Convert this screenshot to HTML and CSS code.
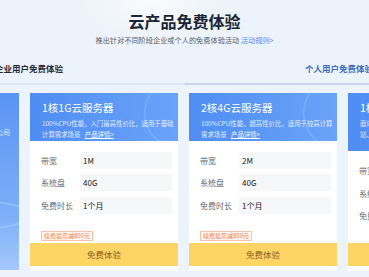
FILE: index.html
```html
<!DOCTYPE html>
<html lang="zh-CN">
<head>
  <meta charset="UTF-8" />
  <meta name="viewport" content="width=device-width, initial-scale=1.0"/>
  <title>云产品免费体验</title>
  <link rel="stylesheet" href="styles.css">
</head>
<body>
  <!-- 标题区 -->
  <div class="hero">
    <h1>云产品免费体验</h1>
    <p>推出针对不同阶段企业或个人的免费体验活动 <a href="#">活动规则&gt;</a></p>
  </div>

  <!-- 切换标签 -->
  <div class="tabs">
    <span class="tab">企业用户免费体验</span>
    <span class="tab tab-right">个人用户免费体验</span>
  </div>
  <div class="tab-line"><span></span><span class="on"></span></div>

  <!-- 卡片列表 -->
  <div class="cards">
    <div class="side-panel">
      <div class="side-text">适用于成长型企业公司</div>
    </div>

    <div class="card">
      <div class="card-head">
        <h3>1核1G云服务器</h3>
        <p>100%CPU性能，入门最高性价比，适用于基础计算需求场景 <a href="#">产品详情&gt;</a></p>
      </div>
      <div class="card-body">
        <div class="row"><span class="label">带宽</span><span class="value">1M</span></div>
        <div class="row"><span class="label">系统盘</span><span class="value">40G</span></div>
        <div class="row"><span class="label">免费时长</span><span class="value">1个月</span></div>
        <span class="badge">续费最高减800元</span>
      </div>
      <div class="btn">免费体验</div>
    </div>

    <div class="card">
      <div class="card-head">
        <h3>2核4G云服务器</h3>
        <p>100%CPU性能，超高性价比，适用于较高计算需求场景 <a href="#">产品详情&gt;</a></p>
      </div>
      <div class="card-body">
        <div class="row"><span class="label">带宽</span><span class="value">2M</span></div>
        <div class="row"><span class="label">系统盘</span><span class="value">40G</span></div>
        <div class="row"><span class="label">免费时长</span><span class="value">1个月</span></div>
        <span class="badge">续费最高减800元</span>
      </div>
      <div class="btn">免费体验</div>
    </div>

    <div class="card">
      <div class="card-head">
        <h3>1核2G轻量服务器</h3>
        <p>面向轻量应用场景，开箱即用，适用于小型网站、博客等应用的服务器</p>
      </div>
      <div class="card-body">
        <div class="row"><span class="label">带宽</span><span class="value">3M</span></div>
        <div class="row"><span class="label">系统盘</span><span class="value">50G</span></div>
        <div class="row"><span class="label">免费时长</span><span class="value">1个月</span></div>
      </div>
      <div class="btn">免费体验</div>
    </div>
  </div>
</body>
</html>
```

FILE: styles.css
```css
/* 基础设置 */
* {
  margin: 0;
  padding: 0;
  box-sizing: border-box;
}
html, body {
  width: 100%;
  height: 100%;
  overflow: hidden;
}
body {
  font-family: "Noto Sans CJK SC", "Noto Sans", sans-serif;
  background:
    radial-gradient(ellipse 70px 40px at 150px 0, rgba(255, 255, 255, 0.7), transparent),
    #edf3fa;
  color: #1e2a3c;
}
a {
  text-decoration: none;
}

/* 标题区 */
.hero {
  padding-top: 11px;
  text-align: center;
}
.hero h1 {
  font-size: 16px;
  line-height: 20px;
  font-weight: 700;
  color: #1b2435;
}
.hero p {
  margin-top: 4px;
  font-size: 7.2px;
  line-height: 10px;
  color: #555e6b;
}
.hero p a {
  color: #4b8df5;
}

/* 标签 */
.tabs {
  display: flex;
  justify-content: space-between;
  margin: 17px -4px 0 -5px;
  font-size: 8.5px;
  line-height: 12px;
  font-weight: 700;
}
.tab-right {
  color: #3a6cc0;
}
.tab-line {
  display: flex;
  margin-top: 9px;
  height: 2px;
}
.tab-line span {
  flex: 1;
  background: #dde8f4;
}
.tab-line span.on {
  background: #c8d7e9;
}

/* 卡片列表 */
.cards {
  display: flex;
  gap: 11px;
  margin-top: 8px;
  margin-left: -130px;
}
.side-panel {
  flex: none;
  width: 149px;
  height: 177px;
  background:
    radial-gradient(ellipse 40px 14px at 120px 122px, transparent 85%, rgba(255, 255, 255, 0.25) 92%, transparent 100%),
    linear-gradient(180deg, #5a94f4 0%, #7eb0f8 70%, #a4c8fb 100%);
  padding: 34px 9px 0 0;
  text-align: right;
}
.side-text {
  font-size: 7px;
  color: rgba(255, 255, 255, 0.85);
}

.card {
  flex: none;
  width: 148px;
  height: 178px;
  background: #fff;
  display: flex;
  flex-direction: column;
}
.card-head {
  height: 58px;
  padding: 8px 3px 0 12px;
  color: #fff;
  background:
    radial-gradient(circle at 150px 20px, transparent 34px, rgba(255, 255, 255, 0.16) 35px, transparent 37px),
    linear-gradient(90deg, #4f8df4, #6aa3f8);
}
.card-head h3 {
  font-size: 10.5px;
  line-height: 14px;
  font-weight: 400;
}
.card-head p {
  margin-top: 3px;
  font-size: 6.4px;
  line-height: 11px;
  color: rgba(255, 255, 255, 0.85);
}
.card-head p a {
  color: #fff;
  text-decoration: underline;
  margin-left: 3px;
}

.card-body {
  flex: 1;
  padding: 11px 6px 0 11px;
}
.row {
  display: flex;
  align-items: center;
  height: 17px;
  margin-bottom: 5.5px;
  font-size: 8px;
}
.label {
  width: 39px;
  color: #666c75;
}
.value {
  flex: 1;
  height: 17px;
  line-height: 17px;
  padding-left: 3px;
  background: #f6f7f9;
  color: #222;
}
.badge {
  display: inline-block;
  margin-top: 5px;
  padding: 0 2px;
  font-size: 6px;
  line-height: 8px;
  color: #ef7a45;
  background: #fff6f1;
  border: 1px solid #f6c3a8;
}

/* 按钮 */
.btn {
  height: 23px;
  line-height: 23px;
  margin-bottom: 5px;
  text-align: center;
  font-size: 8.5px;
  color: #8b5d1a;
  background: #fcd565;
}
```
